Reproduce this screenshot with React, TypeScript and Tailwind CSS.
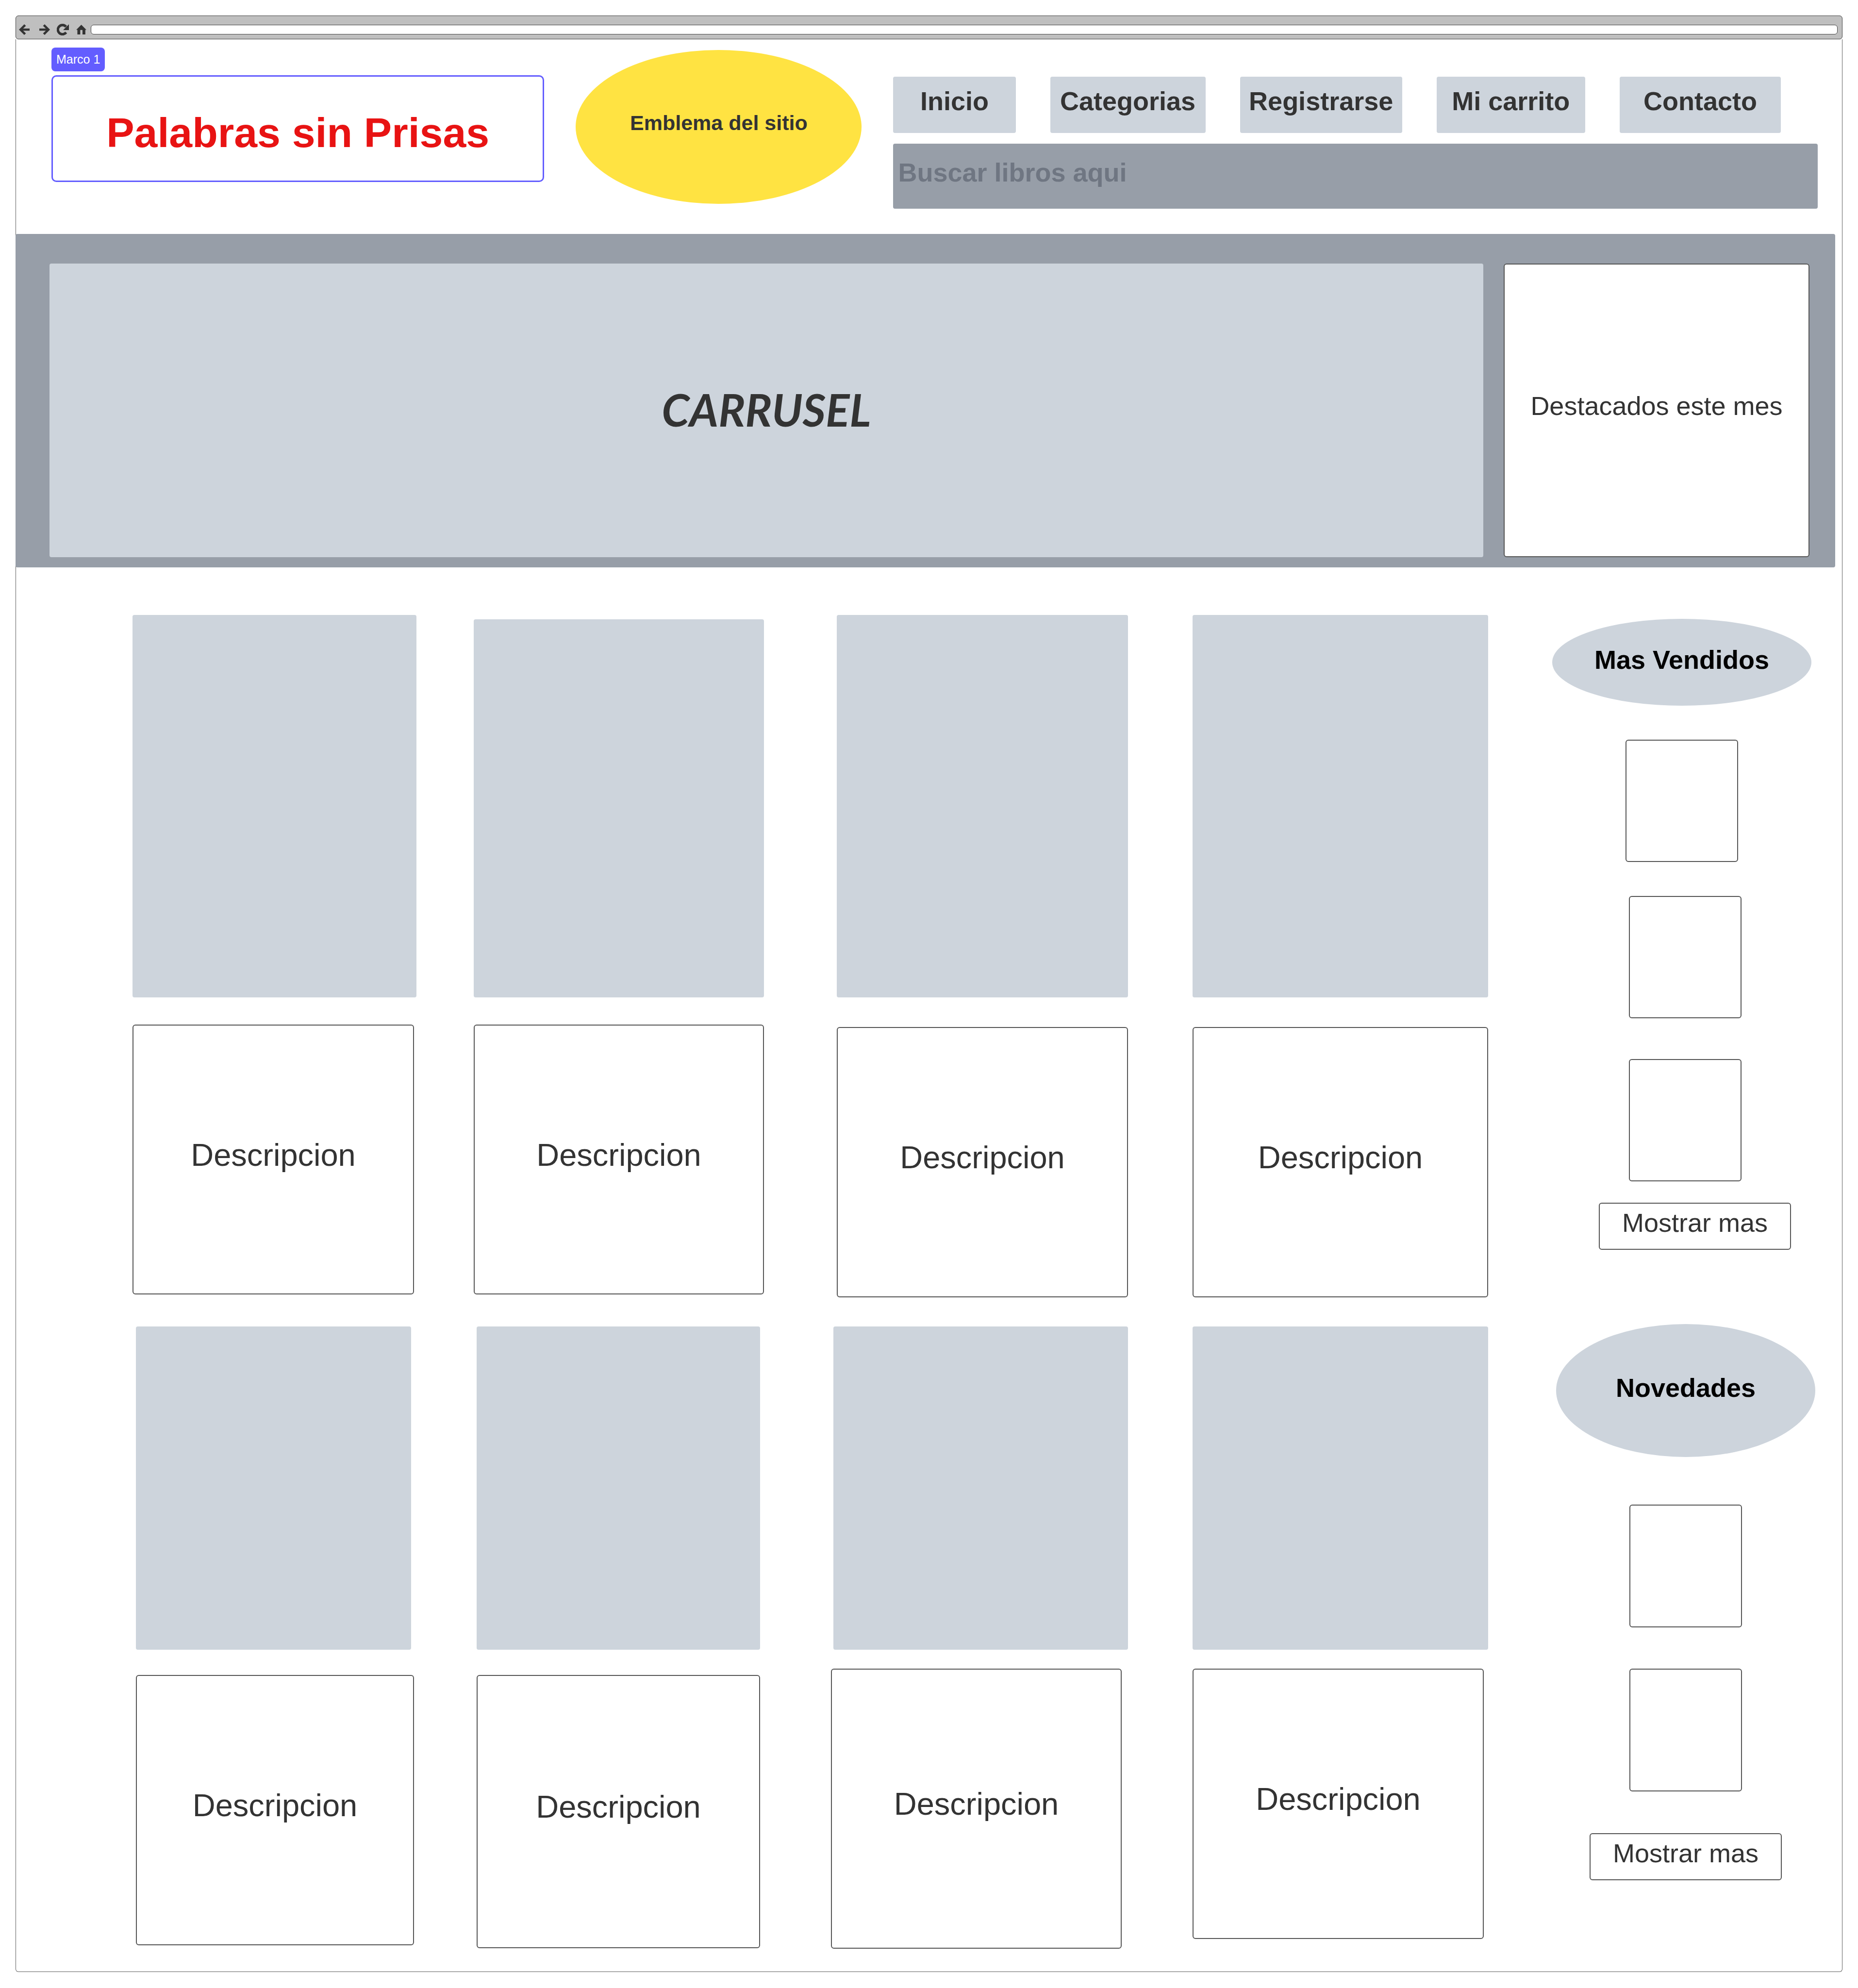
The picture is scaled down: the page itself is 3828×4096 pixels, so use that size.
const tools = [
  { label: "Atrás", size: "w-[22px] mr-5", box: "0 0 84 84", d: "M0 42 42 0 55 12 33 33H84V51H33L55 72 42 84Z" },
  { label: "Adelante", size: "w-[22px] mr-[14px]", box: "0 0 84 84", d: "M84 42 42 0 29 12 51 33H0V51H51L29 72 42 84Z" },
  { label: "Recargar", size: "w-[25px] mr-[15px]", box: "0 0 92 90", d: "M92 4V48H48Z", arc: "M71 66A35 35 0 1 1 70 22" },
  { label: "Página principal", size: "w-[21px] mr-[9px]", box: "0 0 78 77", d: "M39 0 78 39H70V77H48V40H31V77H9V39H0Z" },
];

const links = ["Inicio", "Categorias", "Registrarse", "Mi carrito", "Contacto"];

const firstRow = [
  { cell: "pr-[118px]", cover: "h-[788px]", text: "mt-[56px] h-[556px] mr-[5px]" },
  { cell: "pr-[150px] pt-[9px]", cover: "h-[779px]", text: "mt-[56px] h-[556px]" },
  { cell: "pr-[133px]", cover: "h-[788px]", text: "mt-[61px] h-[557px]" },
  { cell: "", cover: "h-[788px]", text: "mt-[61px] h-[557px]" },
];

const secondRow = [
  { cell: "pr-[129px]", cover: "h-[666px] mr-[6px]", text: "mt-[52px] h-[557px]" },
  { cell: "pr-[146px]", cover: "h-[666px]", text: "mt-[52px] h-[563px]" },
  { cell: "pr-[133px]", cover: "h-[666px] ml-[5px]", text: "mt-[39px] h-[577px] mr-[13px]" },
  { cell: "", cover: "h-[666px]", text: "mt-[39px] h-[557px] mr-[9px]" },
];

type Item = { cell: string; cover: string; text: string };

function Book({ cell, cover, text }: Item) {
  return (
    <article className={cell}>
      <div className={`rounded bg-[#cdd4dc] ${cover}`} />
      <div className={`grid place-items-center rounded-md border-2 border-[#555555] bg-white pb-5 ${text}`}>
        <p className="text-[65px] leading-none">Descripcion</p>
      </div>
    </article>
  );
}

function Thumb({ className }: { className: string }) {
  return <div className={`w-[232px] rounded-md border-2 border-[#555555] bg-white ${className}`} />;
}

function MoreButton({ className }: { className: string }) {
  return (
    <button
      type="button"
      className={`h-[97px] w-[396px] rounded-md border-2 border-[#555555] bg-white pb-4 text-[54px] leading-none ${className}`}
    >
      Mostrar mas
    </button>
  );
}

export default function App() {
  return (
    <div className="bg-white px-8 pt-8 pb-[33px] font-['Liberation_Sans',Arial,sans-serif] text-[#333333]">
      <div className="flex h-[49px] items-center rounded-md border border-[#444444] bg-[#bfbfbf] pt-[9px] pr-[9px] pl-[6px]">
        {tools.map((t) => (
          <button key={t.label} type="button" aria-label={t.label} className={t.size}>
            <svg viewBox={t.box} className="w-full fill-[#333333]">
              <path d={t.d} />
              {t.arc && <path d={t.arc} fill="none" stroke="#333333" strokeWidth="19" />}
            </svg>
          </button>
        ))}
        <input
          type="text"
          aria-label="Dirección"
          className="h-5 min-w-0 flex-1 rounded-md border border-[#444444] bg-white px-2 text-sm"
        />
      </div>

      <main className="rounded-b-md border-x border-b border-[#606060]">
        <header className="grid grid-cols-[1015fr_589fr_1904fr] items-start gap-[65px] pt-[17px] pr-[50px] pb-[52px] pl-[73px]">
          <div className="flex flex-col items-start gap-2">
            <span className="flex h-[49px] items-center rounded-lg bg-[#635dff] px-[10px] text-[25px] leading-none text-white">
              Marco 1
            </span>
            <div className="grid h-[220px] w-full place-items-center rounded-[10px] border-3 border-[#635dff] pt-4">
              <h1 className="text-[86px] leading-none font-bold text-[#e81313]">Palabras sin Prisas</h1>
            </div>
          </div>

          <div className="mt-[5px] grid h-[317px] place-items-center rounded-[50%] bg-[#ffe342] pb-4">
            <p className="text-[43px] leading-none font-bold">Emblema del sitio</p>
          </div>

          <div className="mt-[60px] flex flex-col gap-[22px]">
            <nav className="mr-[76px] grid grid-cols-[252fr_320fr_334fr_306fr_332fr] gap-[71px]">
              {links.map((l) => (
                <a
                  key={l}
                  href="#"
                  className="grid h-[116px] place-items-center rounded bg-[#cdd4dc] pb-4 text-[54px] leading-none font-bold whitespace-nowrap"
                >
                  {l}
                </a>
              ))}
            </nav>
            <input
              type="search"
              aria-label="Buscar libros"
              placeholder="Buscar libros aqui"
              className="h-[134px] w-full rounded bg-[#979ea8] px-[10px] pb-4 text-[54px] font-bold placeholder:text-[#6f7682]"
            />
          </div>
        </header>

        <section className="mr-[14px] -ml-px grid grid-cols-[2954fr_630fr] gap-[42px] rounded bg-[#979ea8] pt-[61px] pr-[53px] pb-[21px] pl-[70px]">
          <div className="grid h-[605px] place-items-center rounded bg-[#cdd4dc] pb-1">
            <p className="font-['Lato','Liberation_Sans',sans-serif] text-[92px] leading-none font-bold italic">
              CARRUSEL
            </p>
          </div>
          <div className="grid place-items-center rounded-md border-2 border-[#555555] bg-white pb-5">
            <p className="text-[54px] leading-none whitespace-nowrap">Destacados este mes</p>
          </div>
        </section>

        <div className="grid grid-cols-[2793fr_542fr] gap-[132px] pt-[98px] pr-[55px] pb-[47px] pl-[240px]">
          <div className="flex flex-col gap-[60px]">
            <section className="grid grid-cols-[703fr_748fr_733fr_609fr]">
              {firstRow.map((b, i) => (
                <Book key={i} {...b} />
              ))}
            </section>
            <section className="ml-[7px] grid grid-cols-[702fr_730fr_745fr_609fr]">
              {secondRow.map((b, i) => (
                <Book key={i} {...b} />
              ))}
            </section>
          </div>

          <aside className="flex flex-col gap-[153px] pt-2">
            <section className="flex flex-col items-center pr-2">
              <div className="grid h-[179px] w-full place-items-center rounded-[50%] bg-[#cdd4dc] pb-3">
                <h2 className="text-[54px] leading-none font-bold text-black">Mas Vendidos</h2>
              </div>
              <Thumb className="mt-[70px] h-[252px]" />
              <Thumb className="mt-[70px] ml-[14px] h-[252px]" />
              <Thumb className="mt-[84px] ml-[14px] h-[252px]" />
              <MoreButton className="mt-[44px] ml-[54px]" />
            </section>
            <section className="flex flex-col items-center pl-2">
              <div className="grid h-[274px] w-full place-items-center rounded-[50%] bg-[#cdd4dc] pb-3">
                <h2 className="text-[54px] leading-none font-bold text-black">Novedades</h2>
              </div>
              <Thumb className="mt-[98px] h-[253px]" />
              <Thumb className="mt-[85px] h-[253px]" />
              <MoreButton className="mt-[86px]" />
            </section>
          </aside>
        </div>
      </main>
    </div>
  );
}
